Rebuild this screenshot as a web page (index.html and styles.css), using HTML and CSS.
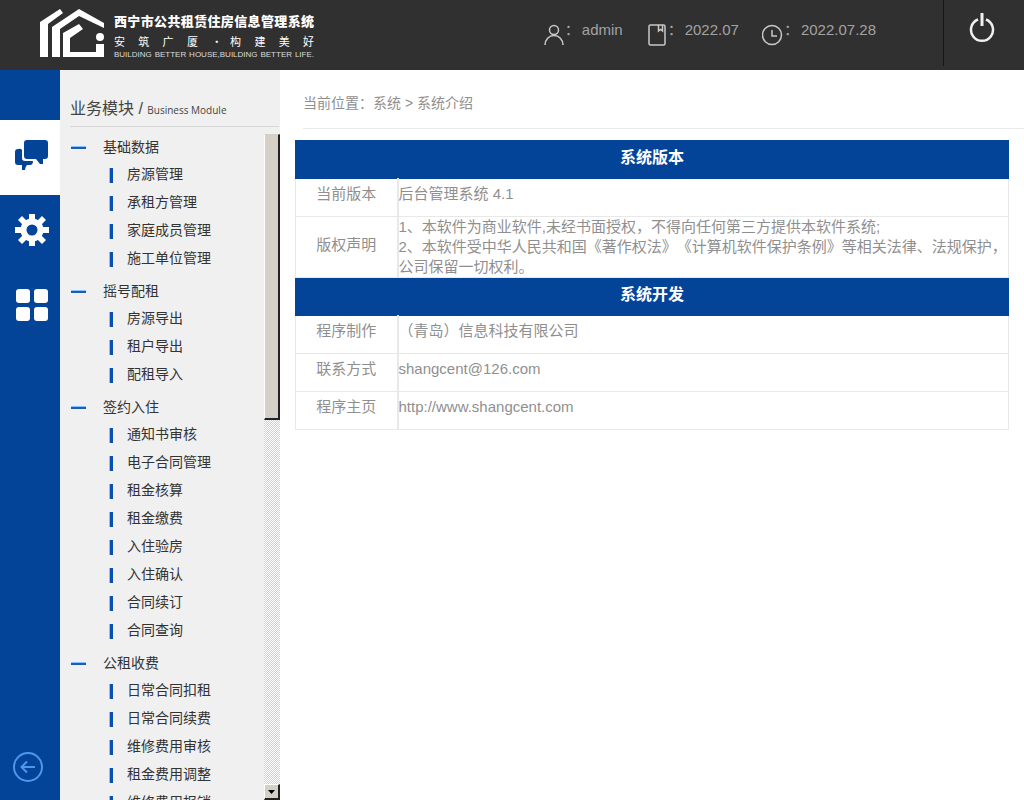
FILE: index.html
```html
<!DOCTYPE html>
<html lang="zh-CN">
<head>
<meta charset="utf-8">
<meta name="viewport" content="width=device-width, initial-scale=1">
<title>西宁市公共租赁住房信息管理系统</title>
<link rel="stylesheet" href="styles.css">
</head>
<body>
<header class="topbar">
  <div class="brand">
    <svg class="brand-mark" viewBox="0 0 65 48" aria-hidden="true">
      <path d="M0 48V13L20 0l3 4L8 15v33zM12 48V18L39 0l25 14v5L39 7 20 20v28zM23 48V24l16-9 4 5-13 9v14h26v-8h8v13z"/>
      <circle cx="60" cy="28" r="4"/>
    </svg>
    <div class="brand-text">
      <h1 class="brand-name">西宁市公共租赁住房信息管理系统</h1>
      <p class="brand-motto">安 筑 广 厦 · 构 建 美 好</p>
      <p class="brand-en">BUILDING BETTER HOUSE,BUILDING BETTER LIFE.</p>
    </div>
  </div>
  <ul class="meta">
    <li class="meta-item">
      <svg class="meta-icon" viewBox="0 0 22 22" aria-hidden="true"><circle cx="11" cy="6" r="4.500"/><path d="M2 21c0-5.500 4-9.500 9-9.500s9 4 9 9.500"/></svg>
      <span class="colon">：</span><span>admin</span>
    </li>
    <li class="meta-item">
      <svg class="meta-icon" viewBox="0 0 22 22" aria-hidden="true"><rect x="3" y="1" width="16" height="20" rx="1.500"/><path d="M12.500 1v6l2-1.500 2 1.500V1"/></svg>
      <span class="colon">：</span><span>2022.07</span>
    </li>
    <li class="meta-item">
      <svg class="meta-icon" viewBox="0 0 22 22" aria-hidden="true"><circle cx="10" cy="11" r="9.500"/><path d="M10 6v6h5"/></svg>
      <span class="colon">：</span><span>2022.07.28</span>
    </li>
  </ul>
  <button class="power" type="button" aria-label="退出">
    <svg class="power-icon" viewBox="0 0 26 32" aria-hidden="true"><path d="M9 7.500a11 11 0 1 0 8 0"/><path d="M13 1v13" stroke-width="3"/></svg>
  </button>
</header>
<div class="shell">
  <nav class="rail" aria-label="模块">
    <button class="rail-tab active" type="button" aria-label="业务模块">
      <svg class="rail-icon" viewBox="0 0 34 32"><path d="M12 1h18q3 0 3 3v13q0 3-3 3h-2v5h-3l-4-5H12q-3 0-3-3V4q0-3 3-3z"/><path d="M3 10q3-1 4 1v8q0 3 3 3h8q0 4-3 4h-3q-2 2-2 5H7v-5H3q-3 0-3-3V13q0-3 3-3z"/></svg>
    </button>
    <button class="rail-tab" type="button" aria-label="设置">
      <svg class="rail-icon" viewBox="0 0 34 32"><circle cx="17" cy="16" r="8.500" fill="none" stroke="currentColor" stroke-width="6"/><path d="M14 0h6v6h-6zM14 26h6v6h-6zM0 13h7v6H0zM27 13h7v6h-7zM3 6l4-4 5 5-4 4zM31 6l-4-4-5 5 4 4zM3 26l4 4 5-5-4-4zM31 26l-4 4-5-5 4-4z"/></svg>
    </button>
    <button class="rail-tab" type="button" aria-label="应用">
      <svg class="rail-icon" viewBox="0 0 34 32"><rect x="1" y="0" width="14" height="14" rx="3"/><rect x="19" y="0" width="14" height="14" rx="3"/><rect x="1" y="18" width="14" height="14" rx="3"/><rect x="19" y="18" width="14" height="14" rx="3"/></svg>
    </button>
    <button class="rail-back" type="button" aria-label="收起">
      <svg class="back-icon" viewBox="0 0 30 30"><circle cx="15" cy="15" r="14"/><path d="M22 15H9M14 9.500L8.500 15l5.500 5.500"/></svg>
    </button>
  </nav>
  <aside class="sidebar">
    <h2 class="side-title">业务模块 / <small>Business Module</small></h2>
    <div class="side-body">
      <div class="menu">
        <section class="group">
          <h3 class="group-title">基础数据</h3>
          <ul class="items">
            <li><a href="#">房源管理</a></li>
            <li><a href="#">承租方管理</a></li>
            <li><a href="#">家庭成员管理</a></li>
            <li><a href="#">施工单位管理</a></li>
          </ul>
        </section>
        <section class="group">
          <h3 class="group-title">摇号配租</h3>
          <ul class="items">
            <li><a href="#">房源导出</a></li>
            <li><a href="#">租户导出</a></li>
            <li><a href="#">配租导入</a></li>
          </ul>
        </section>
        <section class="group">
          <h3 class="group-title">签约入住</h3>
          <ul class="items">
            <li><a href="#">通知书审核</a></li>
            <li><a href="#">电子合同管理</a></li>
            <li><a href="#">租金核算</a></li>
            <li><a href="#">租金缴费</a></li>
            <li><a href="#">入住验房</a></li>
            <li><a href="#">入住确认</a></li>
            <li><a href="#">合同续订</a></li>
            <li><a href="#">合同查询</a></li>
          </ul>
        </section>
        <section class="group">
          <h3 class="group-title">公租收费</h3>
          <ul class="items">
            <li><a href="#">日常合同扣租</a></li>
            <li><a href="#">日常合同续费</a></li>
            <li><a href="#">维修费用审核</a></li>
            <li><a href="#">租金费用调整</a></li>
            <li><a href="#">维修费用报销</a></li>
          </ul>
        </section>
      </div>
      <div class="scrollbar" aria-hidden="true">
        <div class="thumb"></div>
        <div class="arrow"><svg class="arrow-icon" viewBox="0 0 7 4"><path d="M0 0h7L3.500 4z"/></svg></div>
      </div>
    </div>
  </aside>
  <main class="content">
    <p class="crumb">当前位置：系统 &gt; 系统介绍</p>
    <div class="panel">
      <table class="info">
        <colgroup><col class="col-label"><col></colgroup>
        <tbody>
          <tr><th class="band" colspan="2">系统版本</th></tr>
          <tr><th class="label" scope="row">当前版本</th><td>后台管理系统 4.1</td></tr>
          <tr class="notice"><th class="label" scope="row">版权声明</th><td>1、本软件为商业软件,未经书面授权，不得向任何第三方提供本软件系统;<br>2、本软件受中华人民共和国《著作权法》《计算机软件保护条例》等相关法律、法规保护，公司保留一切权利。</td></tr>
          <tr><th class="band" colspan="2">系统开发</th></tr>
          <tr><th class="label" scope="row">程序制作</th><td>（青岛）信息科技有限公司</td></tr>
          <tr><th class="label" scope="row">联系方式</th><td>shangcent@126.com</td></tr>
          <tr><th class="label" scope="row">程序主页</th><td>http://www.shangcent.com</td></tr>
        </tbody>
      </table>
    </div>
  </main>
</div>
</body>
</html>
```

FILE: styles.css
```css
* { box-sizing: border-box; }

body {
  margin: 0;
  height: 100vh;
  display: flex;
  flex-direction: column;
  overflow: hidden;
  background: #fff;
  color: #8f8f8f;
  font: 14px/20px "Liberation Sans", "Noto Sans CJK SC", sans-serif;
  text-spacing-trim: space-all;
}

h1, h2, h3, p, ul { margin: 0; padding: 0; font-weight: normal; }
ul { list-style: none; }
button { border: 0; padding: 0; background: none; color: inherit; cursor: pointer; }
svg { display: block; }

/* Top bar */
.topbar {
  flex: none;
  display: flex;
  height: 70px;
  padding-left: 40px;
  background: #303030;
}

.brand { display: flex; gap: 9px; padding-top: 9px; color: #fff; }
.brand-mark { width: 65px; height: 48px; fill: #fff; }
.brand-text { width: 200px; padding-top: 4px; white-space: nowrap; }
.brand-name { font-size: 13px; line-height: 18px; font-weight: 900; text-align-last: justify; }
.brand-motto {
  font-family: "Noto Sans CJK SC", sans-serif;
  font-size: 11px;
  line-height: 20px;
  text-align-last: justify;
}
.brand-en { font-size: 8px; line-height: 8px; color: #ddd; text-align-last: justify; }

.meta {
  display: flex;
  gap: 23px;
  margin-left: auto;
  padding: 20px 67px 0 0;
  color: #a3a3a3;
  font-size: 15px;
}
.meta-item { display: flex; align-items: flex-start; }
.meta-icon {
  width: 22px;
  height: 22px;
  margin-top: 4px;
  fill: none;
  stroke: #c8c8c8;
  stroke-width: 1.5;
}
.colon { width: 17px; }

.power {
  width: 81px;
  height: 66px;
  padding-left: 25px;
  border-left: 1px solid #161616;
}
.power-icon {
  width: 26px;
  height: 32px;
  margin-bottom: 10px;
  fill: none;
  stroke: #f0f0f0;
  stroke-width: 2.5;
}

/* Body */
.shell { flex: 1; display: flex; min-height: 0; }

.rail {
  flex: none;
  display: flex;
  flex-direction: column;
  width: 60px;
  padding-top: 50px;
  background: #034499;
  color: #fff;
}
.rail-tab { height: 75px; padding: 0 0 6px 15px; }
.rail-tab.active { background: #fff; color: #034499; }
.rail-icon { width: 34px; height: 32px; fill: currentColor; }
.rail-back { margin: auto 0 18px 13px; width: 30px; }
.back-icon { width: 30px; height: 30px; fill: none; stroke: #4f97ee; stroke-width: 2; }

.sidebar {
  flex: none;
  display: flex;
  flex-direction: column;
  width: 220px;
  background: #f0f0f0;
  color: #333;
}
.side-title {
  margin: 0 1px 7px 10px;
  padding: 25px 0 3px;
  border-bottom: 1px solid #d6d6d6;
  font-size: 16px;
  line-height: 28px;
  color: #444;
}
.side-title small { font: 10px "Open Sans", sans-serif; color: #444; }

.side-body { flex: 1; display: flex; min-height: 0; }
.menu { flex: 1; overflow: hidden; }
.group { margin-bottom: 6px; }
.group-title {
  display: flex;
  align-items: center;
  gap: 17px;
  padding-left: 11px;
  font-size: 14px;
  line-height: 26px;
}
.group-title::before {
  content: "";
  width: 15px;
  height: 2px;
  border-top: 1px solid #8cc0f8;
  background: #1c5cb4;
}
.items a {
  display: flex;
  align-items: center;
  gap: 14px;
  padding-left: 49px;
  line-height: 28px;
  color: #333;
  text-decoration: none;
}
.items a::before {
  content: "";
  width: 3px;
  height: 15px;
  margin-top: 3px;
  border-left: 1px solid #8cc0f8;
  background: #0a50b0;
}

.scrollbar {
  display: flex;
  flex-direction: column;
  justify-content: space-between;
  width: 16px;
  background: repeating-conic-gradient(#d4d0c8 0 25%, #fff 0 50%) 0 0 / 2px 2px;
}
.thumb, .arrow {
  border: solid;
  border-width: 1px 2px 2px 1px;
  border-color: #fff #222 #222 #fff;
  background: #d4d0c8;
}
.thumb { height: 43%; border-top-color: #d4d0c8; }
.arrow { display: grid; place-items: center; height: 16px; }
.arrow-icon { width: 7px; height: 4px; }

/* Content */
.content { flex: 1; min-width: 0; overflow: auto; }
.crumb {
  margin-left: 23px;
  padding: 23px 0 15px;
  border-bottom: 1px solid #eaeaea;
}
.panel { padding: 11px 15px 0; }
.info {
  width: 100%;
  border-collapse: collapse;
  table-layout: fixed;
  font-size: 15px;
}
.col-label { width: 102px; }
.info th, .info td {
  height: 38px;
  padding: 0 0 7px;
  border: 1px solid #e8e8e8;
  font-weight: normal;
  text-align: left;
}
.info .label { border-right-width: 2px; text-align: center; }
.info .notice td, .info .notice .label { height: 61px; padding: 0; vertical-align: top; }
.info .notice .label { vertical-align: middle; padding-bottom: 4px; }
.info .band {
  height: 38px;
  padding: 0 0 4px;
  border-color: #034499;
  background: #034499;
  color: #fff;
  font-size: 16px;
  font-weight: bold;
  text-align: center;
}
```
